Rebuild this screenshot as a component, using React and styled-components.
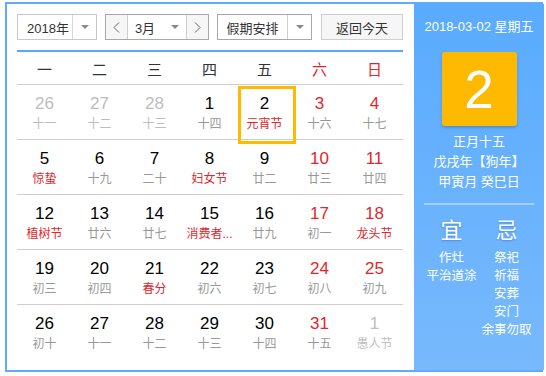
import React from "react";
import styled, { createGlobalStyle, css } from "styled-components";

const Global = createGlobalStyle`
  html, body { margin: 0; padding: 0; background: #fff; }
  body { font-family: "Liberation Sans", "Noto Sans CJK SC", sans-serif; }
  * { box-sizing: border-box; }
`;

const Frame = styled.div`
  margin: 2px 0 0 5px;
  width: 538px;
  height: 370px;
  border: 2px solid #5eacfd;
  display: flex;
`;

const Main = styled.div`
  flex: 1;
  padding: 10px 11px 0 10px;
  background: #fff;
`;

const Toolbar = styled.div`
  display: flex;
  gap: 8px;
  height: 26px;
`;

const Select = styled.div`
  width: ${(p) => p.$w}px;
  height: 26px;
  display: flex;
  border: 1px solid ${(p) => p.$border || "#c8c8c8"};
  background: #fff;
  font-size: 13px;
  color: #333;
`;

const SelectLabel = styled.div`
  flex: 1;
  display: flex;
  align-items: center;
  justify-content: center;
  padding-left: ${(p) => p.$pl || 0}px;
`;

const Caret = styled.div`
  width: 24px;
  border-left: 1px solid ${(p) => p.$border || "#d8d8d8"};
  display: flex;
  align-items: center;
  justify-content: center;
  &::after {
    content: "";
    border-left: 4px solid transparent;
    border-right: 4px solid transparent;
    border-top: 4px solid #8a8a8a;
  }
`;

const MonthGroup = styled.div`
  width: 104px;
  height: 26px;
  display: flex;
  border: 1px solid #a8a8a8;
  font-size: 13px;
  color: #333;
`;

const NavBtn = styled.div`
  width: 22px;
  background: #f6f6f6;
  display: flex;
  align-items: center;
  justify-content: center;
  ${(p) => (p.$side === "left" ? css`border-right: 1px solid #cfcfcf;` : css`border-left: 1px solid #cfcfcf;`)}
`;

const MonthSelect = styled.div`
  flex: 1;
  display: flex;
  background: #fff;
`;

const TodayBtn = styled.div`
  width: 82px;
  height: 26px;
  margin-left: 1px;
  border: 1px solid #cfcfcf;
  background: #f6f6f6;
  font-size: 13px;
  color: #333;
  display: flex;
  align-items: center;
  justify-content: center;
`;

const BlueRule = styled.div`
  margin-top: 10px;
  height: 2px;
  background: #55a8fd;
`;

const WeekHeader = styled.div`
  display: grid;
  grid-template-columns: repeat(7, 55px);
  height: 33px;
  border-bottom: 1px solid #cfcfcf;
`;

const WeekDay = styled.div`
  display: flex;
  align-items: center;
  justify-content: center;
  font-size: 15px;
  color: ${(p) => (p.$red ? "#e3262c" : "#333")};
`;

const Row = styled.div`
  display: grid;
  grid-template-columns: repeat(7, 55px);
  height: 55px;
  border-bottom: 1px solid ${(p) => (p.$last ? "transparent" : "#cfcfcf")};
`;

const Cell = styled.div`
  position: relative;
  padding-top: 9px;
  display: flex;
  flex-direction: column;
  align-items: center;
  ${(p) =>
    p.$today &&
    css`
      &::before {
        content: "";
        position: absolute;
        top: 1px;
        left: 1px;
        width: 52px;
        height: 52px;
        border: 3px solid #ffba00;
      }
    `}
`;

const DayNum = styled.div`
  font-size: 17px;
  line-height: 20px;
  color: ${(p) => (p.$other ? "#bdbdbd" : p.$red ? "#e3262c" : "#000")};
`;

const Lunar = styled.div`
  font-size: 12px;
  line-height: 20px;
  white-space: nowrap;
  color: ${(p) => (p.$other ? "#bdbdbd" : p.$fest ? "#e3262c" : "#999")};
`;

const Side = styled.div`
  width: 130px;
  background: linear-gradient(#59abff, #78b9fc);
  padding: 14px 10px 0;
  color: #fff;
  display: flex;
  flex-direction: column;
  align-items: center;
`;

const SideDate = styled.div`
  font-size: 13px;
  line-height: 18px;
  white-space: nowrap;
`;

const BigDay = styled.div`
  margin-top: 16px;
  width: 75px;
  height: 74px;
  border-radius: 3px;
  background: #ffb900;
  box-shadow: 0 2px 3px rgba(0, 60, 140, 0.25);
  display: flex;
  align-items: center;
  justify-content: center;
  font-size: 53px;
  color: #fff;
`;

const LunarInfo = styled.div`
  margin-top: 6px;
  font-size: 13px;
  line-height: 20px;
  text-align: center;
  white-space: nowrap;
`;

const SideRule = styled.div`
  margin-top: 11px;
  width: 110px;
  height: 2px;
  background: rgba(255, 255, 255, 0.4);
`;

const Advice = styled.div`
  margin-top: 13px;
  width: 110px;
  display: grid;
  grid-template-columns: 55px 55px;
`;

const AdviceCol = styled.div`
  display: flex;
  flex-direction: column;
  align-items: center;
`;

const AdviceTitle = styled.div`
  font-size: 22px;
  line-height: 26px;
  margin-bottom: 5px;
  text-shadow: 0 1px 2px rgba(0, 40, 120, 0.3);
`;

const AdviceItem = styled.div`
  font-size: 12.5px;
  line-height: 18px;
  white-space: nowrap;
`;

const Chevron = ({ dir }) => (
  <svg width="7" height="11" viewBox="0 0 7 11">
    <polyline
      points={dir === "left" ? "6,0.5 1,5.5 6,10.5" : "1,0.5 6,5.5 1,10.5"}
      fill="none"
      stroke="#666"
      strokeWidth="1"
    />
  </svg>
);

const weeks = ["一", "二", "三", "四", "五", "六", "日"];

// [num, lunar, flags]  o=other month, f=festival, t=today
const rows = [
  [["26", "十一", "o"], ["27", "十二", "o"], ["28", "十三", "o"], ["1", "十四"], ["2", "元宵节", "ft"], ["3", "十六"], ["4", "十七"]],
  [["5", "惊蛰", "f"], ["6", "十九"], ["7", "二十"], ["8", "妇女节", "f"], ["9", "廿二"], ["10", "廿三"], ["11", "廿四"]],
  [["12", "植树节", "f"], ["13", "廿六"], ["14", "廿七"], ["15", "消费者...", "f"], ["16", "廿九"], ["17", "初一"], ["18", "龙头节", "f"]],
  [["19", "初三"], ["20", "初四"], ["21", "春分", "f"], ["22", "初六"], ["23", "初七"], ["24", "初八"], ["25", "初九"]],
  [["26", "初十"], ["27", "十一"], ["28", "十二"], ["29", "十三"], ["30", "十四"], ["31", "十五"], ["1", "愚人节", "o"]],
];

export default function App() {
  return (
    <>
      <Global />
      <Frame>
        <Main>
          <Toolbar>
            <Select $w={80}>
              <SelectLabel $pl={6}>2018年</SelectLabel>
              <Caret />
            </Select>
            <MonthGroup>
              <NavBtn $side="left">
                <Chevron dir="left" />
              </NavBtn>
              <MonthSelect>
                <SelectLabel>3月</SelectLabel>
                <Caret $border="transparent" />
              </MonthSelect>
              <NavBtn $side="right">
                <Chevron dir="right" />
              </NavBtn>
            </MonthGroup>
            <Select $w={95} $border="#a8a8a8">
              <SelectLabel>假期安排</SelectLabel>
              <Caret $border="#cfcfcf" />
            </Select>
            <TodayBtn>返回今天</TodayBtn>
          </Toolbar>
          <BlueRule />
          <WeekHeader>
            {weeks.map((w, i) => (
              <WeekDay key={w} $red={i >= 5}>
                {w}
              </WeekDay>
            ))}
          </WeekHeader>
          {rows.map((r, ri) => (
            <Row key={ri} $last={ri === rows.length - 1}>
              {r.map(([n, l, fl = ""], ci) => {
                const other = fl.includes("o");
                return (
                  <Cell key={ci} $today={fl.includes("t")}>
                    <DayNum $other={other} $red={ci >= 5}>
                      {n}
                    </DayNum>
                    <Lunar $other={other} $fest={fl.includes("f")}>
                      {l}
                    </Lunar>
                  </Cell>
                );
              })}
            </Row>
          ))}
        </Main>
        <Side>
          <SideDate>2018-03-02 星期五</SideDate>
          <BigDay>2</BigDay>
          <LunarInfo>
            <div>正月十五</div>
            <div>戊戌年【狗年】</div>
            <div>甲寅月 癸巳日</div>
          </LunarInfo>
          <SideRule />
          <Advice>
            <AdviceCol>
              <AdviceTitle>宜</AdviceTitle>
              <AdviceItem>作灶</AdviceItem>
              <AdviceItem>平治道涂</AdviceItem>
            </AdviceCol>
            <AdviceCol>
              <AdviceTitle>忌</AdviceTitle>
              <AdviceItem>祭祀</AdviceItem>
              <AdviceItem>祈福</AdviceItem>
              <AdviceItem>安葬</AdviceItem>
              <AdviceItem>安门</AdviceItem>
              <AdviceItem>余事勿取</AdviceItem>
            </AdviceCol>
          </Advice>
        </Side>
      </Frame>
    </>
  );
}
